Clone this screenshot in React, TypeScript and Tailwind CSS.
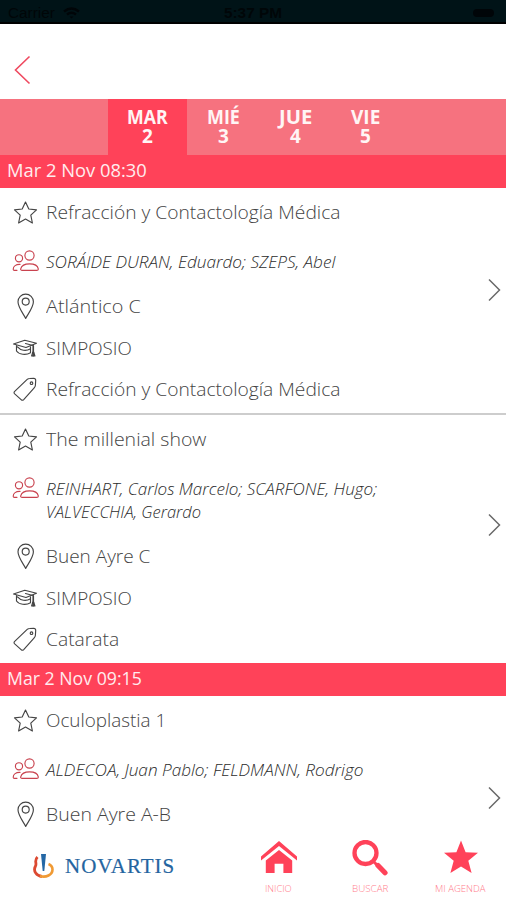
import { useLayoutEffect, useRef, useState, type ReactNode } from 'react';

const sans = "font-['Open_Sans','Noto_Sans',sans-serif]";

/** One line of text, condensed or widened to a given width. */
function Line({ width, children, className = '' }: { width: number; children: ReactNode; className?: string }) {
  const ref = useRef<HTMLSpanElement>(null);
  const [scale, setScale] = useState(1);
  useLayoutEffect(() => {
    if (ref.current) setScale(width / ref.current.offsetWidth);
  }, [width]);
  return (
    <span className={`block ${className}`} style={{ width }}>
      <span ref={ref} className="inline-block origin-left align-top whitespace-nowrap" style={{ transform: `scaleX(${scale})` }}>
        {children}
      </span>
    </span>
  );
}

const stroke = { fill: 'none', stroke: 'currentColor', strokeWidth: 1.15, strokeLinejoin: 'round', strokeLinecap: 'round' } as const;

function StarIcon() {
  return (
    <svg width="28" height="28" viewBox="0 0 28 28" {...stroke}>
      <path d="M13.500 4l3.300 7 7.700.9-5.700 5.300 1.600 7.800-6.900-3.900L6.600 25l1.600-7.800-5.700-5.300 7.700-.9z" />
    </svg>
  );
}

function PeopleIcon() {
  return (
    <svg width="28" height="28" viewBox="0 0 28 28" {...stroke} className="text-[#c9434f]">
      <circle cx="17.500" cy="8.500" r="4.600" />
      <circle cx="7" cy="11.300" r="3.600" />
      <path d="M9.600 23.300q-1.200-.2-.9-1.500c.8-3.200 4.300-5 8.900-5s8.100 1.800 8.700 5q.2 1.300-1 1.500z" />
      <path d="M8 17.400C4 17.200 1.200 19.300 1.200 22.200q0 1.100 1.200 1.100H5" />
    </svg>
  );
}

function PinIcon() {
  return (
    <svg width="28" height="28" viewBox="0 0 28 28" {...stroke}>
      <path d="M13.700 26.400C10.700 21 6 15 6 9.800a7.700 7.700 0 0 1 15.400 0C21.400 15 16.700 21 13.700 26.400z" />
      <circle cx="13.700" cy="9.600" r="3.500" />
    </svg>
  );
}

function CapIcon() {
  return (
    <svg width="28" height="28" viewBox="0 0 28 28" {...stroke}>
      <path d="M1.500 10L12.800 6.300 24.500 9.200 14 13.500z" />
      <path d="M4.500 11.500v5.500c2.500 3.700 9.500 4.500 14 1.800v-6M5.500 12.900c3 3.600 8.600 4.500 12.500 2.100" />
      <path d="M13.500 9.500l7.500 2v6l-1.400 4.400h3.300l-1.400-4.400v-6" />
      <path d="M21.200 18.500v3" strokeWidth="1.800" />
    </svg>
  );
}

function TagIcon() {
  return (
    <svg width="28" height="28" viewBox="0 0 28 28" {...stroke}>
      <path d="M15.200 4.400q1-.9 2.500-.9l4-.2q2 0 2 2l-.3 5q-.1 1.500-1.200 2.500L11.700 24.600q-1.300 1.300-2.600 0L2.700 18.900q-1.300-1.300 0-2.500z" />
      <circle cx="19.500" cy="8.200" r="1.300" />
    </svg>
  );
}

function Detail({ icon, text, width }: { icon: ReactNode; text: string; width: number }) {
  return (
    <div className="flex h-[41.5px] items-center">
      <div className="mr-[6px] h-7 w-7 shrink-0">{icon}</div>
      <Line width={width} className="text-[19px] leading-6">{text}</Line>
    </div>
  );
}

type Text = [string, number];
type Session = { title: Text; people: Text[]; details: Text[]; chevron: string };

function SessionCard({ session, divider }: { session: Session; divider?: boolean }) {
  const icons = [<PinIcon />, <CapIcon />, <TagIcon />];
  return (
    <div className={`flex shrink-0 items-start pb-[3px] pl-3 text-[#444] ${divider ? 'border-b-2 border-[#cdcdcd]' : ''}`}>
      <div className="flex-1">
        <div className="flex h-12 items-center">
          <div className="mr-[6px] h-7 w-7 shrink-0">
            <StarIcon />
          </div>
          <Line width={session.title[1]} className="text-[19px] leading-6">{session.title[0]}</Line>
        </div>
        <div className="flex pt-[13.5px] pb-[13px]">
          <div className="-mt-[3px] mr-[6px] -mb-[3px] h-[27px] w-7 shrink-0">
            <PeopleIcon />
          </div>
          <div>
            {session.people.map(([name, width]) => (
              <Line key={name} width={width} className="text-[17px] leading-[23px] text-[#2c2c2c] italic">{name}</Line>
            ))}
          </div>
        </div>
        {session.details.map(([text, width], i) => (
          <Detail key={text} icon={icons[i]} text={text} width={width} />
        ))}
      </div>
      <svg width="14" height="24" viewBox="0 0 14 24" className={`mr-[5px] shrink-0 ${session.chevron}`} fill="none" stroke="#6a6a6a" strokeWidth="1.500">
        <path d="M2 1.500L12.500 12 2 22.500" />
      </svg>
    </div>
  );
}

function TimeHeader({ text, width }: { text: string; width: number }) {
  return (
    <div className="flex h-[33px] shrink-0 items-center bg-[#ff4259] pb-[3px] pl-[7px] text-[#ffecee]">
      <Line width={width} className="text-[19px] leading-6 font-normal">{text}</Line>
    </div>
  );
}

function Day({ name, day, width, active }: { name: string; day: string; width: number; active?: boolean }) {
  return (
    <div className={`flex flex-col items-center pt-2 text-[19px] leading-5 font-bold text-[#fff5f5] ${active ? 'bg-[#ff4259]' : ''}`}>
      <Line width={width}>{name}</Line>
      <span className="-mt-px">{day}</span>
    </div>
  );
}

const sessions: Session[] = [
  {
    title: ['Refracción y Contactología Médica', 294],
    people: [['SORÁIDE DURAN, Eduardo; SZEPS, Abel', 289]],
    details: [['Atlántico C', 95], ['SIMPOSIO', 86], ['Refracción y Contactología Médica', 294]],
    chevron: 'mt-[90px]',
  },
  {
    title: ['The millenial show', 160],
    people: [['REINHART, Carlos Marcelo; SCARFONE, Hugo;', 331], ['VALVECCHIA, Gerardo', 155]],
    details: [['Buen Ayre C', 104], ['SIMPOSIO', 86], ['Catarata', 73]],
    chevron: 'mt-[98px]',
  },
  {
    title: ['Oculoplastia 1', 120],
    people: [['ALDECOA, Juan Pablo; FELDMANN, Rodrigo', 317]],
    details: [['Buen Ayre A-B', 125]],
    chevron: 'mt-[90px]',
  },
];

function Tab({ label, width, children }: { label: string; width: number; children: ReactNode }) {
  return (
    <div className="flex w-[91px] flex-col items-center text-[#ff4259]">
      <div className="h-[43px]">{children}</div>
      <Line width={width} className="text-[9px] leading-3 font-light text-[#ff7c8b]">{label}</Line>
    </div>
  );
}

export default function App() {
  return (
    <div className={`flex h-[900px] w-[506px] flex-col overflow-hidden bg-white font-[350] ${sans}`}>
      <div className="grid h-6 shrink-0 grid-cols-3 items-center border-b-2 border-black bg-[#001317] px-2 font-['Liberation_Sans',sans-serif] text-[14px] leading-4 font-normal text-[#000608]">
        <div className="flex items-center gap-2 pt-1">
          <Line width={47}>Carrier</Line>
          <svg width="17" height="12" viewBox="0 0 17 12" fill="none" stroke="#000508" strokeWidth="2.400">
            <path d="M1 4.500Q8.500-1.500 16 4.500M4 7.500q4.500-3.500 9 0" />
            <path d="M6.500 9.500h4l-2 2z" fill="#000508" stroke="none" />
          </svg>
        </div>
        <div className="flex justify-center pt-1 font-bold">
          <Line width={58}>5:37 PM</Line>
        </div>
        <div className="mt-1 mr-1 h-2 w-[21px] justify-self-end rounded-sm bg-[#000508]" />
      </div>

      <div className="flex h-[75px] shrink-0 items-center pt-[17px] pl-[14px]">
        <svg width="17" height="30" viewBox="0 0 17 30" fill="none" stroke="#ef4a60" strokeWidth="1.600">
          <path d="M15.500 1.500L1.500 15l14 13.500" />
        </svg>
      </div>

      <div className="grid h-14 shrink-0 grid-cols-[108px_79px_73px_71px_69px] bg-[#f6727f]">
        <div />
        <Day name="MAR" day="2" width={41} active />
        <Day name="MIÉ" day="3" width={33} />
        <Day name="JUE" day="4" width={33} />
        <Day name="VIE" day="5" width={29} />
      </div>

      <div className="flex min-h-0 flex-1 flex-col overflow-hidden">
        <TimeHeader text="Mar 2 Nov 08:30" width={140} />
        <SessionCard session={sessions[0]} divider />
        <SessionCard session={sessions[1]} />
        <TimeHeader text="Mar 2 Nov 09:15" width={135} />
        <SessionCard session={sessions[2]} />
      </div>

      <div className="flex h-[68px] shrink-0 bg-white pt-2">
        <div className="flex h-[52px] w-[233px] items-center gap-[9px] pl-[32px]">
          <svg width="24" height="28" viewBox="0 0 24 28">
            <path d="M5.500 5C1.500 9 5.500 11 3.300 14.500 1 19 4.500 24 10 24.500" fill="none" stroke="#dc4a32" strokeWidth="2.800" />
            <path d="M8 24c6 1.800 12.500-1 12.500-6.500 0-2.500-1.500-4.500-4-5.500" fill="none" stroke="#f09a34" strokeWidth="2.600" />
            <path d="M9 2h5l-1.700 17h-1.600z" fill="#2467a5" />
          </svg>
          <Line width={110} className="font-['Liberation_Serif',serif] text-[21px] leading-7 font-normal tracking-[1px] text-[#2464a0] [-webkit-text-stroke:0.2px_#2464a0]">NOVARTIS</Line>
        </div>
        <Tab label="INICIO" width={27}>
          <svg width="36" height="34" viewBox="0 0 36 34" fill="currentColor">
            <path d="M0 16.500L18 1l18 15.500v4L18 6 0 20.500z" />
            <path d="M4.800 20.500L18 10l13.200 10.500V33h-8.800v-9.200h-8.800V33H4.800z" />
          </svg>
        </Tab>
        <Tab label="BUSCAR" width={36}>
          <svg width="36" height="36" viewBox="0 0 36 36" fill="none" stroke="currentColor">
            <circle cx="13.500" cy="13" r="11" strokeWidth="4.300" />
            <path d="M21.500 21.500l4 4" strokeWidth="3" />
            <path d="M26 25.500l7 7.200" strokeWidth="5.200" strokeLinecap="round" />
          </svg>
        </Tab>
        <Tab label="MI AGENDA" width={51}>
          <svg width="36" height="34" viewBox="0 0 36 34" fill="currentColor">
            <path d="M18 .5l4.600 11.700 12.400.5-9.700 8 3.300 12.300L18 26.400 7.400 33l3.300-12.300-9.700-8 12.400-.5z" />
          </svg>
        </Tab>
      </div>
    </div>
  );
}
